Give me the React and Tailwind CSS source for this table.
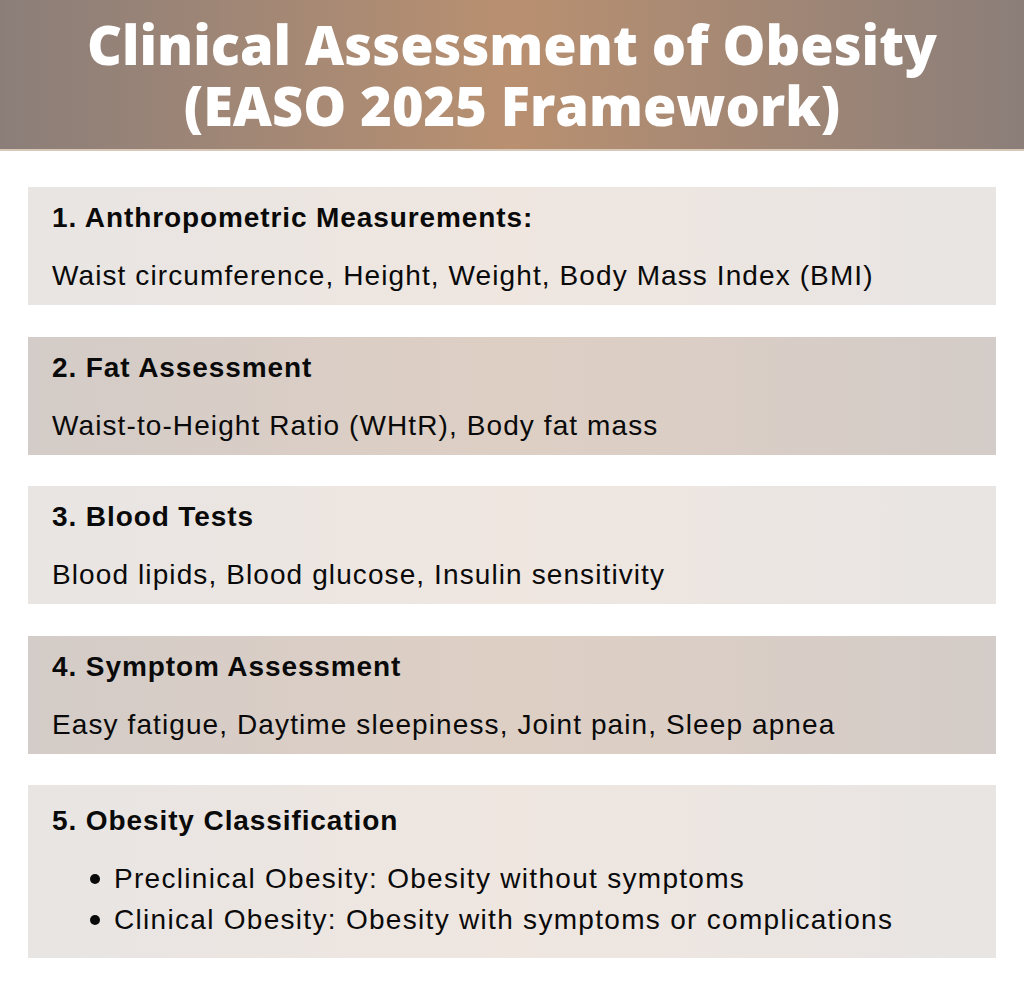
import React from 'react';

const items = [
  { title: '1. Anthropometric Measurements:', body: 'Waist circumference, Height, Weight, Body Mass Index (BMI)', dark: false },
  { title: '2. Fat Assessment', body: 'Waist-to-Height Ratio (WHtR), Body fat mass', dark: true },
  { title: '3. Blood Tests', body: 'Blood lipids, Blood glucose, Insulin sensitivity', dark: false },
  { title: '4. Symptom Assessment', body: 'Easy fatigue, Daytime sleepiness, Joint pain, Sleep apnea', dark: true },
];

const bullets = [
  'Preclinical Obesity: Obesity without symptoms',
  'Clinical Obesity: Obesity with symptoms or complications',
];

const cardLight = 'bg-gradient-to-r from-[#e8e5e3] via-[#efe6e0] to-[#e8e5e3]';
const cardDark = 'bg-gradient-to-r from-[#d4ccc8] via-[#decfc4] to-[#d4ccc8]';

const App = () => {
  return (
    <div className="w-[1024px] h-[992px] bg-white font-['Liberation_Sans',Arial,sans-serif] text-[#0a0a0a]">
      <div className="h-[151px] border-b-2 border-[#d8c8b8] bg-gradient-to-r from-[#8b7e79] via-[#b99070] to-[#8b7e79] flex flex-col items-center justify-center">
        <h1 className="font-['Open_Sans',sans-serif] font-extrabold text-white text-[54px] leading-[61px] text-center">
          <div>Clinical Assessment of Obesity</div>
          <div>(EASO 2025 Framework)</div>
        </h1>
      </div>

      <div className="px-[28px] pt-[36px] flex flex-col gap-[31.5px]">
        {items.map((item) => (
          <div
            key={item.title}
            className={`${item.dark ? cardDark : cardLight} h-[118px] px-[24px] pt-[15px]`}
          >
            <div className="text-[28px] leading-[32px] font-bold tracking-[0.9px]">{item.title}</div>
            <div className="mt-[26px] text-[28px] leading-[32px] tracking-[1.1px]">{item.body}</div>
          </div>
        ))}

        <div className={`${cardLight} h-[173px] px-[24px] pt-[20px]`}>
          <div className="text-[28px] leading-[32px] font-bold tracking-[0.9px]">5. Obesity Classification</div>
          <ul className="mt-[21px]">
            {bullets.map((b) => (
              <li key={b} className="flex items-center text-[28px] leading-[41px] tracking-[1.3px]">
                <span className="ml-[38px] mr-[14px] w-[10px] h-[10px] rounded-full bg-[#0a0a0a] shrink-0" />
                {b}
              </li>
            ))}
          </ul>
        </div>
      </div>
    </div>
  );
};

export default App;
